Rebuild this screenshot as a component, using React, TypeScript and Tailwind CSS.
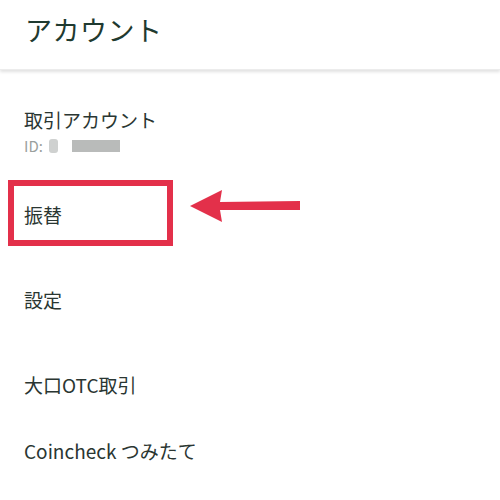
const items = [
  { label: "振替", h: "h-[85px]" },
  { label: "設定", h: "h-[85px]" },
  { label: "大口OTC取引", h: "h-[66px]" },
  { label: "Coincheck つみたて", h: "h-[60px]" },
];

export default function App() {
  return (
    <div className="relative w-[500px] h-[500px] bg-white overflow-hidden font-['Noto_Sans_CJK_JP','Noto_Sans',sans-serif] text-[#2a3632]">
      <header className="h-[70px] flex items-center pl-[25px] shadow-[0_2px_3px_rgba(0,0,0,0.12)] border-b border-[#ececec]">
        <h1 className="text-[27px] font-normal tracking-[0.5px] text-[#1f3a30] -mt-[8px]">アカウント</h1>
      </header>

      <ul className="pl-[24px]">
        <li className="pt-[36px] h-[131px]">
          <div className="text-[19px] leading-[28px]">取引アカウント</div>
          <div className="flex items-center text-[15px] leading-[20px] text-[#9aa09d] mt-[2px]">
            <span>ID:</span>
            <span className="ml-[6px] w-[9px] h-[14px] rounded-[3px] bg-[#cfd1d0]" />
            <span className="ml-[14px] w-[48px] h-[12px] bg-[#b9bbba]" />
          </div>
        </li>
        {items.map((item) => (
          <li key={item.label} className={`${item.h} text-[19px] leading-[28px]`}>
            {item.label}
          </li>
        ))}
      </ul>

      {/* annotation */}
      <div className="absolute left-[8px] top-[180px] w-[165px] h-[66px] border-[6px] border-[#e3304a]" />
      <svg className="absolute left-[188px] top-[188px]" width="116" height="36" viewBox="0 0 116 36">
        <polygon points="2,18 34,2 32,14 112,13 112,22 32,22 34,34" fill="#e3304a" />
      </svg>
    </div>
  );
}
